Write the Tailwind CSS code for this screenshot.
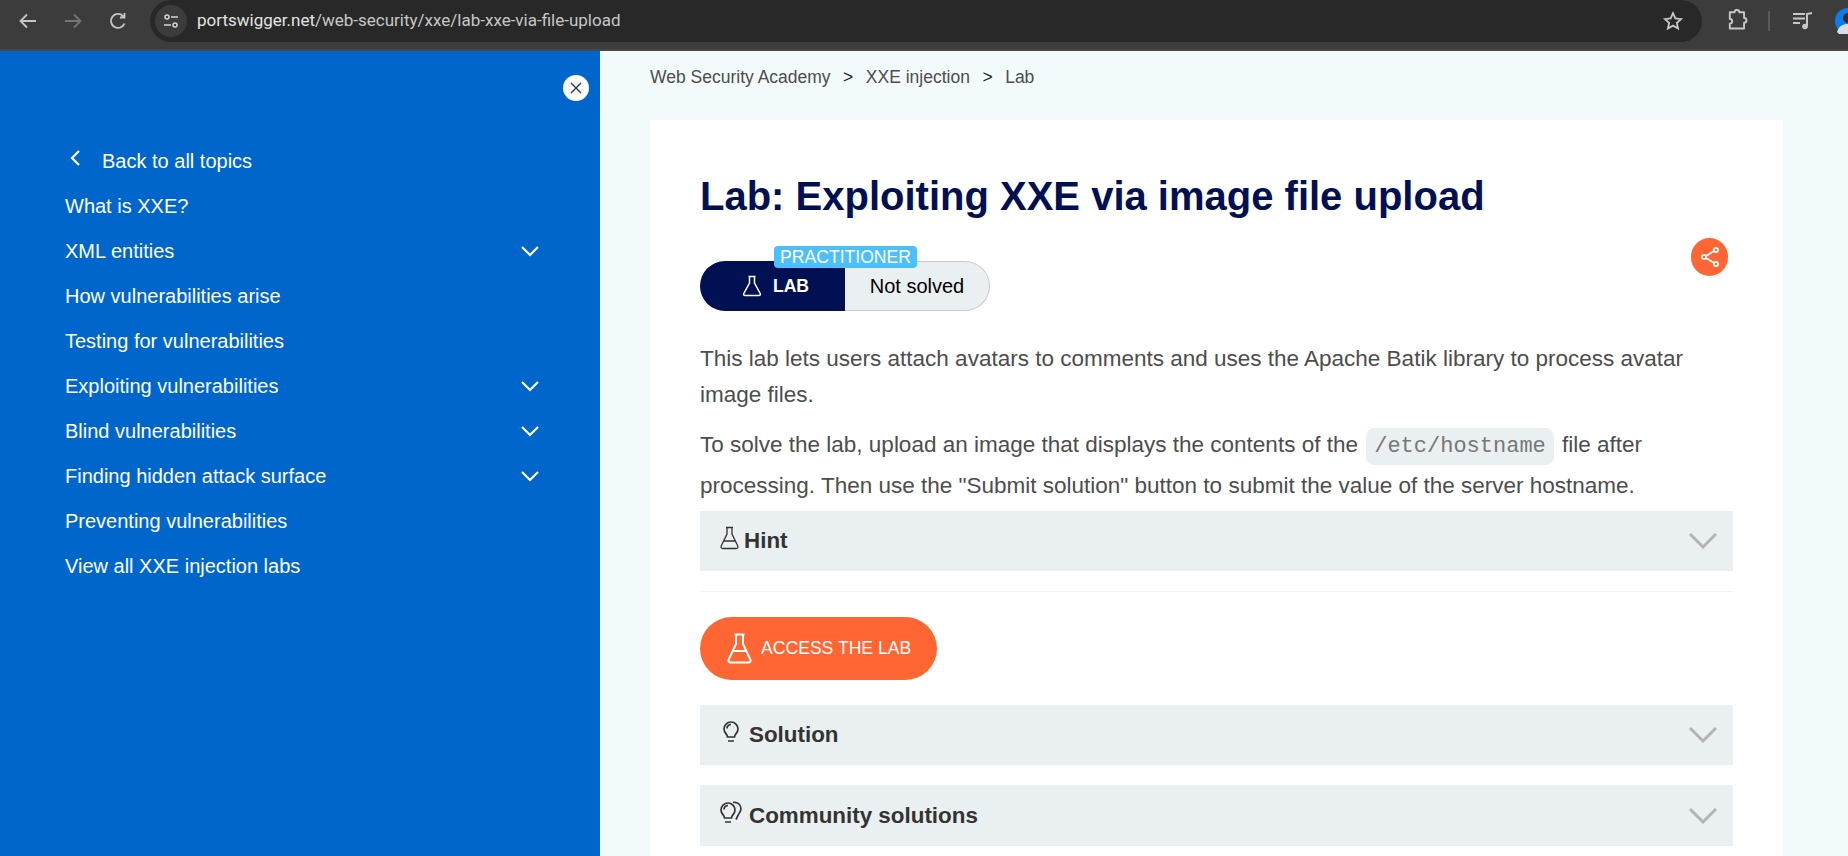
<!DOCTYPE html>
<html lang="en">
<head>
  <meta charset="UTF-8">
  <title>Lab: Exploiting XXE via image file upload</title>
  <script src="https://cdn.jsdelivr.net/npm/@tailwindcss/browser@4"></script>
</head>
<body class="h-[856px] w-[1848px] overflow-hidden bg-[#f2fafc] font-['Liberation_Sans',sans-serif]">
  <!-- browser toolbar -->
  <header class="flex h-[51px] items-start border-b-[2px] border-[#474747] bg-[#3c3c3c]">
    <div class="flex h-[42px] w-[150px] items-center pl-[16px] gap-[21px]">
      <svg class="w-[24px] h-[24px]" viewBox="0 0 24 24" fill="none" stroke="#c7c7c7" stroke-width="1.8"><path d="M20 12H5M11 5.500 4.500 12l6.500 6.500"/></svg>
      <svg class="w-[24px] h-[24px]" viewBox="0 0 24 24" fill="none" stroke="#757575" stroke-width="1.8"><path d="M4 12h15M13 5.500l6.500 6.500-6.500 6.500"/></svg>
      <svg class="w-[24px] h-[24px]" viewBox="0 0 24 24" fill="none" stroke="#c7c7c7" stroke-width="1.8"><path d="M18.500 14.500A7 7 0 1 1 17 7l1.500 1.500M18.500 4v4.500H14"/></svg>
    </div>
    <div class="flex h-[42px] w-[1552px] items-center rounded-full bg-[#282828] pl-[5px]">
      <div class="flex h-[32px] w-[32px] items-center justify-center rounded-full bg-[#3c3c3c]">
        <svg class="w-[16px] h-[16px]" viewBox="0 0 16 16" fill="none" stroke="#d5d5d5" stroke-width="1.500"><circle cx="4" cy="4" r="2"/><path d="M8 4h7M1 12h7"/><circle cx="12" cy="12" r="2"/></svg>
      </div>
      <span class="ml-[10px] text-[17px] text-[#c7c7c7] font-['Roboto',sans-serif]"><span class="text-[#e3e3e3]">portswigger.net</span>/web-security/xxe/lab-xxe-via-file-upload</span>
      <svg class="ml-auto mr-[18px] w-[22px] h-[22px]" viewBox="0 0 24 24" fill="none" stroke="#c7c7c7" stroke-width="2"><path d="m12 3.500 2.600 5.700 6.200.7-4.600 4.200 1.300 6.100L12 17.100l-5.500 3.100 1.300-6.100-4.600-4.200 6.200-.7z"/></svg>
    </div>
    <div class="flex h-[42px] flex-1 items-center">
      <svg class="ml-[24px] w-[24px] h-[24px]" viewBox="0 0 24 24" fill="none" stroke="#c7c7c7" stroke-width="2" stroke-linejoin="round"><path d="M4 4h5a2.500 2.500 0 0 1 5 0h5v6a2 2 0 0 1 0 5v6H4v-5a2.500 2.500 0 0 0 0-5V4z" transform="translate(0 -0.500) scale(0.95 0.950)"/></svg>
      <div class="ml-[18px] h-[20px] w-[2px] bg-[#5a5a5a]"></div>
      <svg class="ml-[22px] w-[22px] h-[22px]" viewBox="0 0 22 22" fill="none" stroke="#c7c7c7" stroke-width="2"><path d="M1 4h12M1 8.500h12M1 13h7M15 16V4l5-1"/><circle cx="13" cy="16.500" r="2.800" fill="#c7c7c7" stroke="none"/></svg>
      <svg class="ml-[21px] w-[13px] h-[26px]" viewBox="0 0 13 26"><circle cx="13" cy="13" r="13" fill="#0a7cf0"/><circle cx="13" cy="10" r="5" fill="#3a2a25"/><path d="M2 24c2-7 7-8 11-8v10H4z" fill="#d8dde6"/></svg>
    </div>
  </header>

  <div class="flex h-[805px]">
    <!-- sidebar -->
    <aside class="relative w-[600px] shrink-0 bg-[#0066cc] pl-[65px] pt-[87px] text-[20px] text-white">
      <button class="absolute left-[563px] top-[24px] flex h-[26px] w-[26px] items-center justify-center rounded-full bg-white">
        <svg class="w-[14px] h-[14px]" viewBox="0 0 14 14" fill="none" stroke="#2f3a44" stroke-width="1.400"><path d="m2 2 10 10M12 2 2 12"/></svg>
      </button>
      <nav class="w-[475px]">
        <a class="flex h-[45px] items-center">
          <svg class="ml-[4px] mr-[22px] mb-[5px] w-[12px] h-[18px]" viewBox="0 0 12 18" fill="none" stroke="white" stroke-width="2.200"><path d="M10 2 3 9l7 7"/></svg>
          <span class="ml-[-1px]">Back to all topics</span>
        </a>
        <a class="flex h-[45px] items-center">What is XXE?</a>
        <a class="flex h-[45px] items-center justify-between">XML entities
          <svg class="w-[20px] h-[12px]" viewBox="0 0 20 12" fill="none" stroke="white" stroke-width="2.200"><path d="m2 2 8 8 8-8"/></svg></a>
        <a class="flex h-[45px] items-center">How vulnerabilities arise</a>
        <a class="flex h-[45px] items-center">Testing for vulnerabilities</a>
        <a class="flex h-[45px] items-center justify-between">Exploiting vulnerabilities
          <svg class="w-[20px] h-[12px]" viewBox="0 0 20 12" fill="none" stroke="white" stroke-width="2.200"><path d="m2 2 8 8 8-8"/></svg></a>
        <a class="flex h-[45px] items-center justify-between">Blind vulnerabilities
          <svg class="w-[20px] h-[12px]" viewBox="0 0 20 12" fill="none" stroke="white" stroke-width="2.200"><path d="m2 2 8 8 8-8"/></svg></a>
        <a class="flex h-[45px] items-center justify-between">Finding hidden attack surface
          <svg class="w-[20px] h-[12px]" viewBox="0 0 20 12" fill="none" stroke="white" stroke-width="2.200"><path d="m2 2 8 8 8-8"/></svg></a>
        <a class="flex h-[45px] items-center">Preventing vulnerabilities</a>
        <a class="flex h-[45px] items-center">View all XXE injection labs</a>
      </nav>
    </aside>

    <!-- main -->
    <main class="flex-1 pl-[50px]">
      <div class="flex h-[69px] items-start gap-[12.500px] pt-[13px] text-[17.500px] text-[#4d4d4d]">
        <span>Web Security Academy</span><span class="text-[#222]">&gt;</span><span>XXE injection</span><span class="text-[#222]">&gt;</span><span>Lab</span>
      </div>
      <article class="relative h-[736px] w-[1133px] bg-white px-[50px] pt-[52px]">
        <h1 class="text-[40px] leading-[48px] font-bold text-[#010f53]">Lab: Exploiting XXE via image file upload</h1>
        <button class="absolute left-[1041px] top-[118px] flex h-[38px] w-[37px] items-center justify-center rounded-full bg-[#ff6633]">
          <svg class="w-[26px] h-[26px]" viewBox="0 0 22 22" fill="none" stroke="white" stroke-width="1.500"><path d="M8 10 15 5.500M8 12l7 4.500"/><circle cx="6" cy="11" r="1.800"/><circle cx="16" cy="5" r="1.800"/><circle cx="16" cy="17" r="1.800"/></svg>
        </button>
        <div class="relative mt-[41px] flex h-[50px] w-[290px]">
          <div class="flex w-[145px] items-center justify-center gap-[11px] rounded-l-full bg-[#010f53] pl-[6px] text-[17.600px] font-bold text-white">
            <svg class="w-[20px] h-[22px]" viewBox="0 0 20 22" fill="none" stroke="white" stroke-width="1.500"><path d="M6.500 1.500h7M7.500 1.500v6.500L1.800 18.500c-.5 1 .1 2 1.200 2h14c1.100 0 1.700-1 1.200-2L12.500 8V1.500"/></svg>
            LAB
          </div>
          <div class="flex flex-1 items-center justify-center rounded-r-full border border-l-0 border-[#c8ccd0] bg-[#eaeff2] text-[20px] text-black">Not solved</div>
          <span class="absolute left-[74px] top-[-15px] rounded-[4px] bg-[#4cbfff] px-[6px] text-[17.600px] leading-[22px] text-white">PRACTITIONER</span>
        </div>
        <p class="mt-[30px] w-[1033px] text-[22.500px] leading-[36px] text-[#4d4d4d]">This lab lets users attach avatars to comments and uses the Apache Batik library to process avatar image files.</p>
        <p class="mt-[12px] text-[22.500px] leading-[39px] text-[#4d4d4d]">To solve the lab, upload an image that displays the contents of the <code class="mx-[2px] rounded-[8px] bg-[#eaeff2] px-[8px] py-[6px] font-['Liberation_Mono',monospace] text-[22px] text-[#777]">/etc/hostname</code> file after<br>processing. Then use the "Submit solution" button to submit the value of the server hostname.</p>
        <div class="mt-[6px] flex h-[60px] w-[1033px] items-center justify-between bg-[#eaeff2] pl-[20px] pr-[16px] text-[22.400px] font-bold text-[#333332]">
          <span class="flex items-center gap-[5px]">
            <svg class="mb-[6px] w-[19px] h-[24px]" viewBox="0 0 19 24" fill="none" stroke="#333332" stroke-width="1.300"><path d="M6 1.500h7M7 1.500V8L1.200 20c-.5 1.200.2 2.500 1.400 2.500h13.800c1.200 0 1.900-1.300 1.400-2.500L12 8V1.500M4 15h11"/></svg>
            Hint</span>
          <svg class="w-[28px] h-[18px]" viewBox="0 0 28 18" fill="none" stroke="#b3b3b3" stroke-width="3"><path d="m1 2 13 13L27 2"/></svg>
        </div>
        <div class="mt-[20px] h-[1px] w-[1033px] bg-[#f1f3f5]"></div>
        <a class="mt-[25px] flex h-[63px] w-[237px] items-center gap-[9px] rounded-full bg-[#ff6633] pl-[27px] text-[17.600px] text-white">
          <svg class="w-[25px] h-[31px]" viewBox="0 0 25 31" fill="none" stroke="white" stroke-width="2"><path d="M7.500 1.500h10M9 1.500v9.500L1.700 26.500c-.8 1.700.3 3 2 3h17.600c1.700 0 2.800-1.300 2-3L16 11V1.500M5 18h15"/></svg>
          ACCESS THE LAB
        </a>
        <div class="mt-[25px] flex h-[60px] w-[1033px] items-center justify-between bg-[#eaeff2] pl-[23px] pr-[16px] text-[22.400px] font-bold text-[#333332]">
          <span class="flex items-center gap-[10px]">
            <svg class="mb-[6px] w-[16px] h-[21px]" viewBox="0 0 16 21" fill="none" stroke="#333332" stroke-width="1.700"><path d="M5 20h6M4.500 16h7c0-3 3.500-4 3.500-8A7 7 0 0 0 1 8c0 4 3.500 5 3.500 8zM4 7.500A4 4 0 0 1 8 3.500"/></svg>
            Solution</span>
          <svg class="w-[28px] h-[18px]" viewBox="0 0 28 18" fill="none" stroke="#b3b3b3" stroke-width="3"><path d="m1 2 13 13L27 2"/></svg>
        </div>
        <div class="mt-[20px] flex h-[61px] w-[1033px] items-center justify-between bg-[#eaeff2] pl-[20px] pr-[16px] text-[22.400px] font-bold text-[#333332]">
          <span class="flex items-center gap-[7px]">
            <svg class="mb-[6px] w-[22px] h-[22px]" viewBox="0 0 22 22" fill="none" stroke="#333332" stroke-width="1.700"><path d="M5 21h6M4.500 17h7c0-3 3.500-4 3.500-8A7 7 0 0 0 1 9c0 4 3.500 5 3.500 8zM4 8.500a4 4 0 0 1 4-4M13 1.500c4-1 8 2 8 6 0 3-2 4.500-3 7l-2 4"/></svg>
            Community solutions</span>
          <svg class="w-[28px] h-[18px]" viewBox="0 0 28 18" fill="none" stroke="#b3b3b3" stroke-width="3"><path d="m1 2 13 13L27 2"/></svg>
        </div>
      </article>
    </main>
  </div>
</body>
</html>
